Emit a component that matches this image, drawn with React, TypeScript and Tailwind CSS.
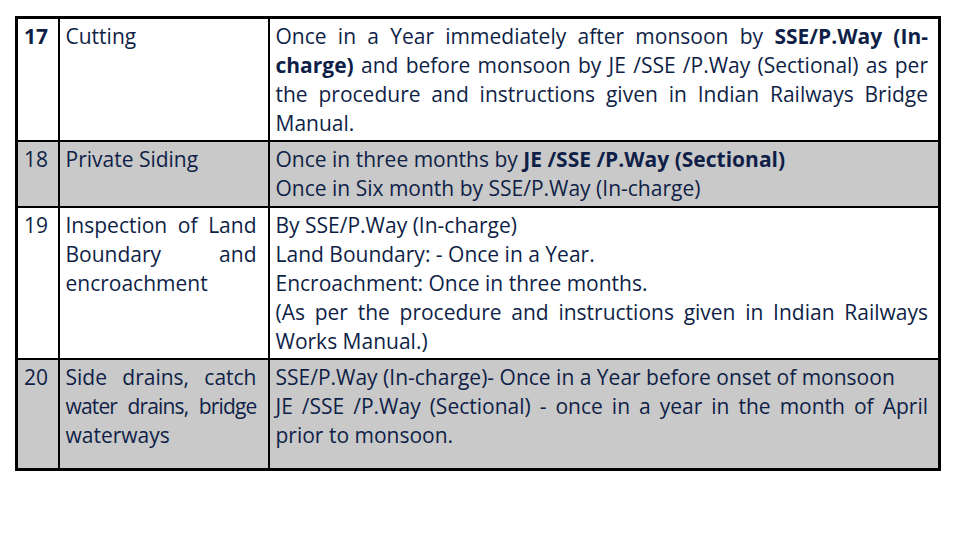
import type { ReactNode } from "react";

// one visual line; `just` stretches it to the full cell width like the source doc
function Line({ children, just = false }: { children: ReactNode; just?: boolean }) {
  return (
    <div className={just ? "whitespace-nowrap text-justify [text-align-last:justify]" : "whitespace-nowrap"}>
      {children}
    </div>
  );
}

interface Row {
  no: string;
  bold?: boolean;
  gray?: boolean;
  h: string;
  item: ReactNode;
  when: ReactNode;
}

const rows: Row[] = [
  {
    no: "17",
    bold: true,
    h: "h-[123px]",
    item: <Line>Cutting</Line>,
    when: (
      <>
        <Line just>
          Once in a Year immediately after monsoon by <b>SSE/P.Way (In-</b>
        </Line>
        <Line just>
          <b>charge)</b> and before monsoon by JE /SSE /P.Way (Sectional) as per
        </Line>
        <Line just>the procedure and instructions given in Indian Railways Bridge</Line>
        <Line>Manual.</Line>
      </>
    ),
  },
  {
    no: "18",
    gray: true,
    h: "h-[66px]",
    item: <Line>Private Siding</Line>,
    when: (
      <>
        <Line>
          Once in three months by <b>JE /SSE /P.Way (Sectional)</b>
        </Line>
        <Line>Once in Six month by SSE/P.Way (In-charge)</Line>
      </>
    ),
  },
  {
    no: "19",
    h: "h-[152px]",
    item: (
      <>
        <Line just>Inspection of Land</Line>
        <Line just>Boundary and</Line>
        <Line>encroachment</Line>
      </>
    ),
    when: (
      <>
        <Line>By SSE/P.Way (In-charge)</Line>
        <Line>Land Boundary: - Once in a Year.</Line>
        <Line>Encroachment: Once in three months.</Line>
        <Line just>(As per the procedure and instructions given in Indian Railways</Line>
        <Line>Works Manual.)</Line>
      </>
    ),
  },
  {
    no: "20",
    gray: true,
    h: "h-[111px]",
    item: (
      <>
        <Line just>Side drains, catch</Line>
        <Line just>
          <span className="tracking-[-0.04em]">water drains, bridge</span>
        </Line>
        <Line>waterways</Line>
      </>
    ),
    when: (
      <>
        <Line>SSE/P.Way (In-charge)- Once in a Year before onset of monsoon</Line>
        <Line just>JE /SSE /P.Way (Sectional) - once in a year in the month of April</Line>
        <Line>prior to monsoon.</Line>
      </>
    ),
  },
];

export default function App() {
  return (
    <div className="h-[540px] w-[960px] bg-white pl-[15px] pt-[16px] font-['Open_Sans',sans-serif] text-[21px] leading-[29px] text-[#0f1f47]">
      <table className="w-[926px] table-fixed border-collapse border-[3px] border-black">
        <colgroup>
          <col className="w-[42px]" />
          <col className="w-[210px]" />
          <col />
        </colgroup>
        <tbody>
          {rows.map((r) => (
            <tr key={r.no} className={`${r.h} ${r.gray ? "bg-[#c9c9c9]" : "bg-white"}`}>
              <td className={`border-2 border-black pl-[6px] pt-[3px] align-top ${r.bold ? "font-bold" : ""}`}>{r.no}</td>
              <td className="border-2 border-black pl-[6px] pr-[11px] pt-[3px] align-top">{r.item}</td>
              <td className="border-2 border-black pl-[6px] pr-[10px] pt-[3px] align-top">{r.when}</td>
            </tr>
          ))}
        </tbody>
      </table>
    </div>
  );
}
